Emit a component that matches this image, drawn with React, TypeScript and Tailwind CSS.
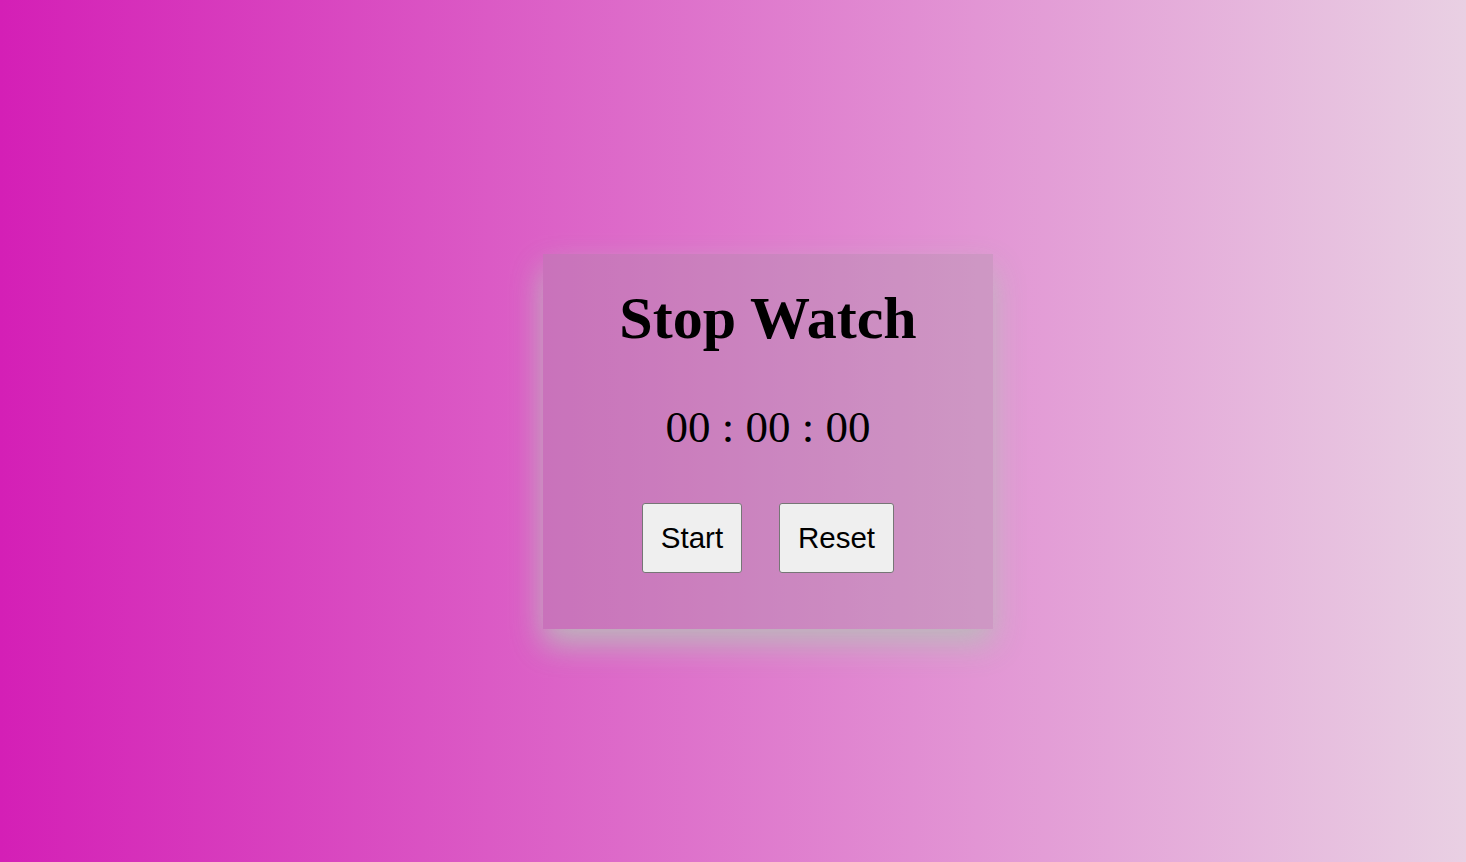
import React, { useEffect, useRef, useState } from "react";

const pad = (n: number) => String(n).padStart(2, "0");

export default function App() {
  const [running, setRunning] = useState<boolean>(false);
  const [seconds, setSeconds] = useState<number>(0);
  const timer = useRef<number | null>(null);

  useEffect(() => {
    if (!running) return;
    timer.current = window.setInterval(() => setSeconds((s) => s + 1), 1000);
    return () => {
      if (timer.current) window.clearInterval(timer.current);
    };
  }, [running]);

  const h = Math.floor(seconds / 3600);
  const m = Math.floor((seconds % 3600) / 60);
  const s = seconds % 60;

  return (
    <div className="min-h-[862px] w-full flex items-center justify-center pl-[70px] pt-[21px] bg-[linear-gradient(to_right,#d41fb6,#e9d0e3)]">
      <div className="w-[450px] h-[375px] flex flex-col items-center pt-[32px] bg-[rgba(160,155,160,0.3)] shadow-[0_15px_30px_rgba(186,186,186,0.95)]">
        <h1 className="font-['Liberation_Serif',serif] font-bold text-[60px] leading-[65px] text-black">
          Stop Watch
        </h1>
        <div className="mt-[51px] font-['Liberation_Serif',serif] text-[45px] leading-[50px] text-black">
          {pad(h)} : {pad(m)} : {pad(s)}
        </div>
        {/* -------- controls ------ */}
        <div className="mt-[51px] flex gap-[37px] font-['Liberation_Sans',sans-serif]">
          <button
            onClick={() => setRunning(!running)}
            className="w-[100px] h-[70px] rounded-[3px] border border-[#767676] bg-[#efefef] text-[29.5px] text-black"
          >
            {running ? "Stop" : "Start"}
          </button>
          <button
            onClick={() => {
              setRunning(false);
              setSeconds(0);
            }}
            className="w-[115px] h-[70px] rounded-[3px] border border-[#767676] bg-[#efefef] text-[29.5px] text-black"
          >
            Reset
          </button>
        </div>
      </div>
    </div>
  );
}
